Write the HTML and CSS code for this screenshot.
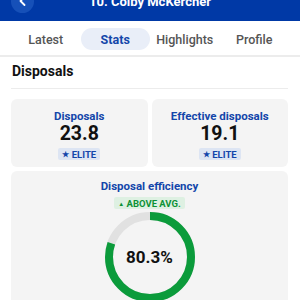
FILE: index.html
```html
<!DOCTYPE html>
<html lang="en">
<head>
    <meta charset="UTF-8">
    <meta name="viewport" content="width=device-width, initial-scale=1.0">
    <title>Colby McKercher - Stats</title>
    <link rel="stylesheet" href="styles.css">
</head>
<body>

    <header class="topbar">
        <div class="topbar-row">
            <button class="back-btn" type="button" aria-label="Back">
                <svg width="12" height="12" viewBox="0 0 12 12"><path d="M7.5 2 L3.5 6 L7.5 10" fill="none" stroke="#fff" stroke-width="1.8" stroke-linecap="round" stroke-linejoin="round"/></svg>
            </button>
            <h1 class="player-name">10. Colby McKercher</h1>
        </div>
    </header>

    <nav class="tabs">
        <a class="tab">Latest</a>
        <a class="tab active">Stats</a>
        <a class="tab">Highlights</a>
        <a class="tab">Profile</a>
    </nav>

    <main class="content">
        <h2 class="section-title">Disposals</h2>

        <div class="stat-grid">
            <div class="stat-card">
                <div class="stat-label">Disposals</div>
                <div class="stat-value">23.8</div>
                <span class="badge badge-elite"><span class="badge-icon">&#9733;</span> ELITE</span>
            </div>
            <div class="stat-card">
                <div class="stat-label">Effective disposals</div>
                <div class="stat-value">19.1</div>
                <span class="badge badge-elite"><span class="badge-icon">&#9733;</span> ELITE</span>
            </div>
        </div>

        <div class="stat-card wide">
            <div class="stat-label">Disposal efficiency</div>
            <span class="badge badge-good"><span class="badge-icon">&#9650;</span> ABOVE AVG.</span>
            <div class="donut">
                <svg width="90" height="90" viewBox="0 0 90 90">
                    <circle cx="45" cy="45" r="41" fill="none" stroke="#e1e1e1" stroke-width="8"/>
                    <circle cx="45" cy="45" r="41" fill="none" stroke="#0b9b3b" stroke-width="8"
                        stroke-dasharray="206.9 257.6" transform="rotate(-90 45 45)"/>
                </svg>
                <div class="donut-value">80.3%</div>
            </div>
        </div>
    </main>

</body>
</html>
```

FILE: styles.css
```css
body {
    margin: 0;
    font-family: Roboto, "Noto Sans", sans-serif;
    background: #fff;
    color: #111;
}
.topbar {
    height: 21px;
    overflow: hidden;
    background: #0039a6;
    display: flex;
    align-items: flex-end;
}
.topbar-row {
    position: relative;
    flex-shrink: 0;
    width: 100%;
    height: 40px;
    display: flex;
    align-items: center;
    justify-content: center;
}
.back-btn {
    position: absolute;
    left: 11px;
    width: 23px;
    height: 23px;
    border: none;
    border-radius: 50%;
    background: #1650b8;
    padding: 0;
    display: flex;
    align-items: center;
    justify-content: center;
}
.player-name {
    margin: 0;
    color: #fff;
    font-size: 13px;
    font-weight: 700;
}
.tabs {
    display: grid;
    grid-template-columns: repeat(4, 1fr);
    padding: 7px 11px 5px;
    border-bottom: 2px solid #ececec;
}
.tab {
    height: 22px;
    display: flex;
    align-items: center;
    justify-content: center;
    border-radius: 11px;
    font-size: 12.5px;
    font-weight: 500;
    color: #555;
}
.tab.active {
    background: #e9eef8;
    color: #1346aa;
    font-weight: 700;
}
.content {
    padding: 0 12px 0 11px;
}
.section-title {
    margin: 0;
    padding: 6px 1px 9px;
    font-size: 14px;
    font-weight: 700;
    border-bottom: 1px solid #ececec;
}
.stat-grid {
    display: grid;
    grid-template-columns: 1fr 1fr;
    gap: 4px;
    margin-top: 10px;
}
.stat-card {
    background: #f4f4f4;
    border-radius: 6px;
    height: 68px;
    display: flex;
    flex-direction: column;
    align-items: center;
    padding-top: 10px;
    box-sizing: border-box;
}
.stat-label {
    font-size: 11.5px;
    line-height: 14px;
    font-weight: 700;
    color: #1346aa;
}
.stat-value {
    font-size: 19.5px;
    font-weight: 700;
    color: #111;
    line-height: 22px;
}
.badge {
    font-size: 9.5px;
    font-weight: 700;
    padding: 1px 4px 0;
    border-radius: 2px;
    margin-top: 3px;
    line-height: 11px;
}
.badge-icon {
    font-size: 8px;
    vertical-align: 1px;
}
.badge-elite {
    background: #dde5f3;
    color: #1346aa;
}
.badge-good {
    background: #def0e2;
    color: #0d9136;
    margin-top: 4px;
}
.badge-good .badge-icon {
    font-size: 6px;
}
.stat-card.wide {
    height: 140px;
    margin-top: 4px;
    padding-top: 8px;
}
.donut {
    position: relative;
    width: 90px;
    height: 90px;
    margin-top: 3px;
}
.donut svg {
    display: block;
}
.donut-value {
    position: absolute;
    inset: 0;
    display: flex;
    align-items: center;
    justify-content: center;
    font-size: 17px;
    font-weight: 700;
}
```
